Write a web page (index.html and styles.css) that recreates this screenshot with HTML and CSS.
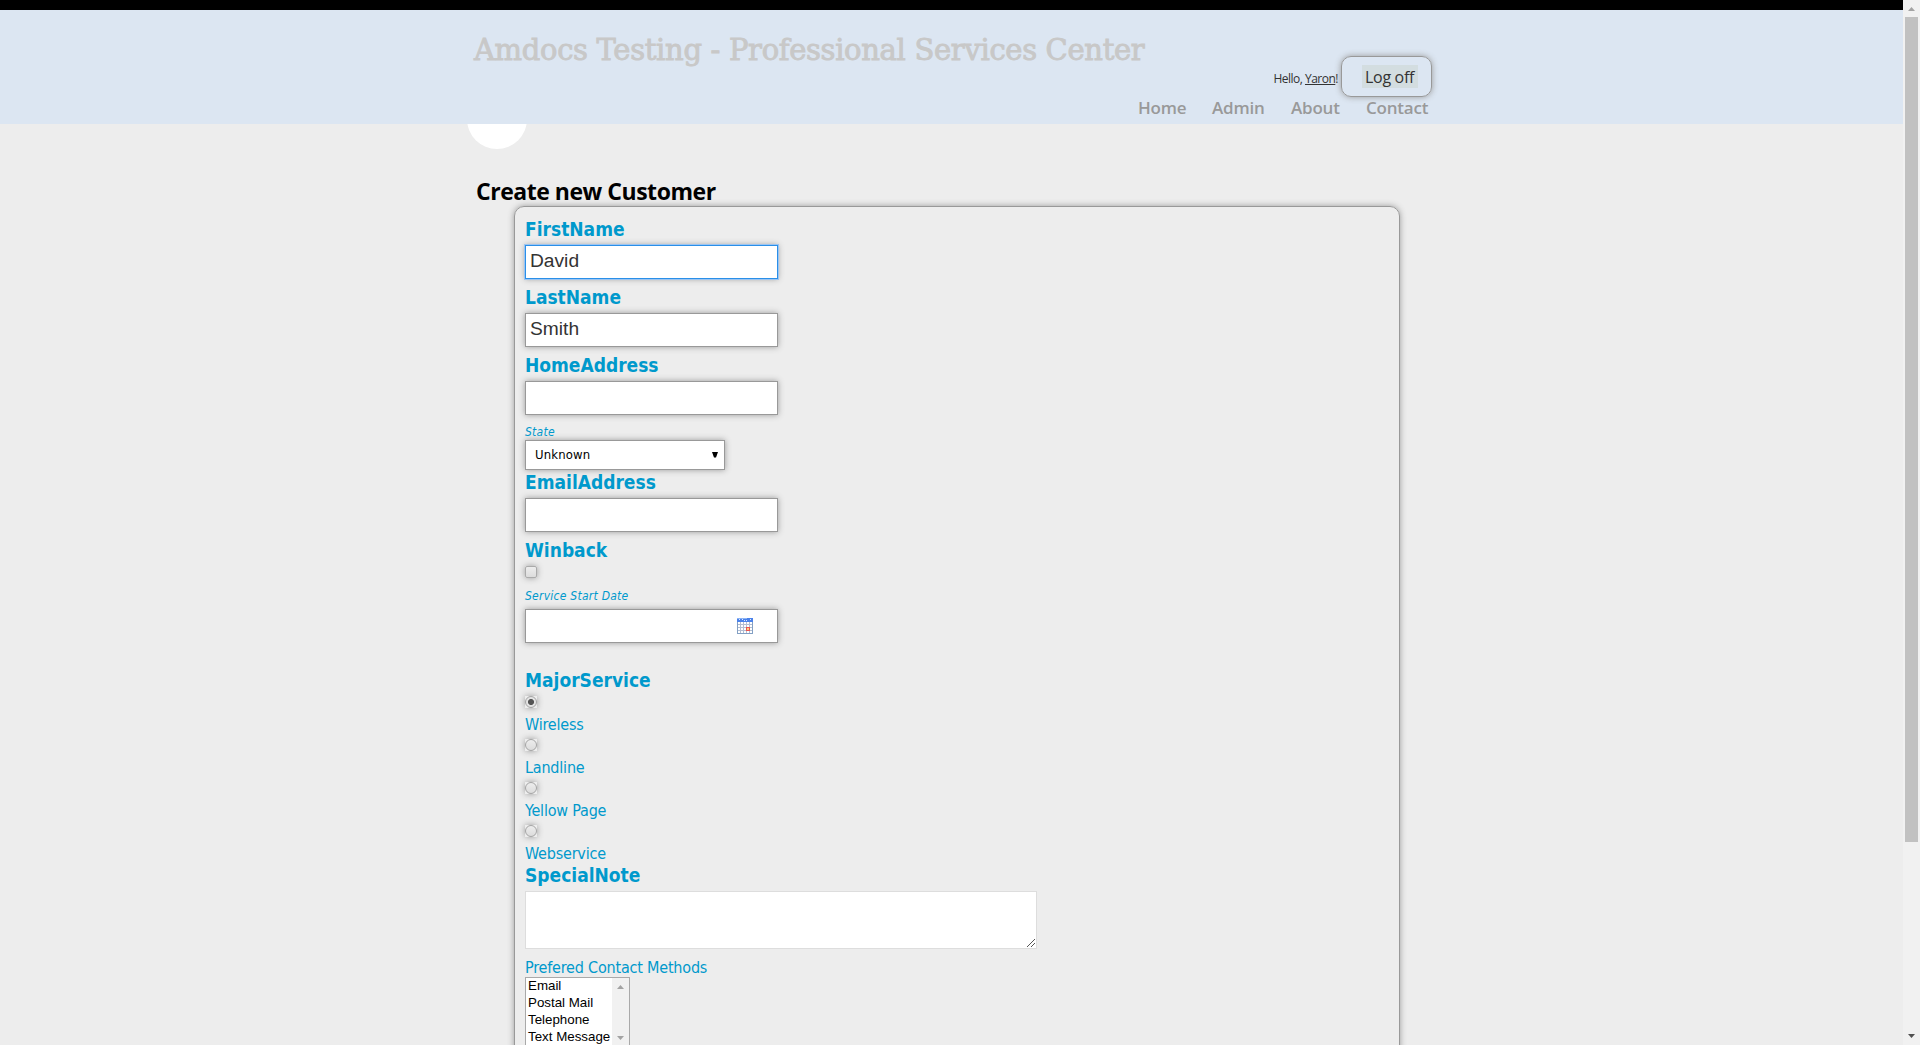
FILE: index.html
```
<!DOCTYPE html>
<html lang="en">
<head>
<meta charset="utf-8">
<title>Create new Customer</title>
<link rel="stylesheet" href="styles.css">
</head>
<body>
<div class="page">
  <header class="header">
    <div class="header-inner">
      <div class="site-title"><span>Amdocs Testing - Professional Services Center</span></div>
      <div class="header-side">
        <div class="login"><span class="hello">Hello, <a class="user">Yaron</a>!</span><div class="logoff-box"><a class="logoff">Log off</a></div></div>
        <nav class="nav"><a class="n1">Home</a><a class="n2">Admin</a><a class="n3">About</a><a class="n4">Contact</a></nav>
      </div>
    </div>
  </header>
  <main class="main">
    <div class="circle-clip"><div class="circle"></div></div>
    <h2 class="heading"><span>Create new Customer</span></h2>
    <form class="panel">
      <div class="label"><span>FirstName</span></div>
      <div class="input focused">David</div>
      <div class="label"><span>LastName</span></div>
      <div class="input">Smith</div>
      <div class="label"><span>HomeAddress</span></div>
      <div class="input"></div>
      <div class="hint state">State</div>
      <div class="select"><span>Unknown</span><svg width="6" height="6" viewBox="0 0 6 6"><path d="M0 0h6L4 5.500H2z"/></svg></div>
      <div class="label tight"><span>EmailAddress</span></div>
      <div class="input"></div>
      <div class="label"><span>Winback</span></div>
      <div class="check"></div>
      <div class="hint date">Service Start Date</div>
      <div class="input with-icon"><svg width="16" height="16" viewBox="0 0 16 16" shape-rendering="crispEdges"><rect width="16" height="16" fill="#83a0c4"/><rect width="16" height="4" fill="#4b82ea"/><path d="M0 0h10v1H0z" fill="#8db4f5"/><path d="M2 1h1v1H2zM5 1h1v1H5zM7 2h1v1H7zM9 2h1v1H9zM13 1h1v1h-1z" fill="#dce8ff"/><path d="M1 4h14v11H1z" fill="#fff"/><path d="M3 4h1v11H3zM6 4h1v11H6zM9 4h1v11H9zM12 4h1v11h-1zM1 6h14v1H1zM1 9h14v1H1zM1 12h14v1H1z" fill="#b4bed2"/><path d="M9 9h4v4H9z" fill="#ed5650"/><path d="M10 10h2v2h-2z" fill="#ffd077"/></svg></div>
      <div class="label major"><span>MajorService</span></div>
      <div class="radio on"></div><div class="option">Wireless</div>
      <div class="radio"></div><div class="option">Landline</div>
      <div class="radio"></div><div class="option">Yellow Page</div>
      <div class="radio"></div><div class="option">Webservice</div>
      <div class="label note"><span>SpecialNote</span></div>
      <div class="textarea"><svg width="8" height="8" viewBox="0 0 8 8" shape-rendering="crispEdges"><path d="M0 7h1v1H0zM1 6h1v1H1zM2 5h1v1H2zM3 4h1v1H3zM4 3h1v1H4zM5 2h1v1H5zM6 1h1v1H6zM7 0h1v1H7zM4 7h1v1H4zM5 6h1v1H5zM6 5h1v1H6zM7 4h1v1H7z" fill="#555"/></svg></div>
      <div class="option methods">Prefered Contact Methods</div>
      <div class="listbox">
        <div class="items"><div>Email</div><div>Postal Mail</div><div>Telephone</div><div>Text Message</div></div>
        <div class="list-scroll">
          <svg width="7" height="4" viewBox="0 0 7 4"><path d="M3.500 0L7 4H0z"/></svg>
          <svg width="7" height="4" viewBox="0 0 7 4"><path d="M3.500 4L7 0H0z"/></svg>
        </div>
      </div>
    </form>
  </main>
</div>
<div class="scrollbar">
  <svg width="7" height="4" viewBox="0 0 7 4"><path d="M3.500 0L7 4H0z" fill="#a3a3a3"/></svg>
  <div class="thumb"></div>
  <svg class="down" width="7" height="4" viewBox="0 0 7 4"><path d="M3.500 4L7 0H0z" fill="#505050"/></svg>
</div>
</body>
</html>
```
FILE: styles.css
```
* { box-sizing: border-box; }
html { height: 1045px; overflow: hidden; }
body { margin: 0; height: 1045px; overflow: hidden; display: flex; background: #ededed; }
.page { width: 1903px; height: 1045px; overflow: hidden; border-top: 10px solid #000; }
svg { display: block; }

.header { height: 114px; background: #dce6f2; }
.header-inner { width: 958px; margin-left: 474px; display: flex; justify-content: space-between; }
.site-title { width: 664px; padding-top: 21px; white-space: nowrap; font: 29px/38px "DejaVu Serif", serif; letter-spacing: -0.320px; color: #c8c8c8; -webkit-text-stroke: 0.900px #c8c8c8; }
.header-side { width: 294px; flex: none; padding-top: 46px; font-family: "Open Sans", sans-serif; }
.login { display: flex; justify-content: flex-end; color: #333; }
.hello { font-size: 12px; line-height: 16px; letter-spacing: -0.500px; margin: 15px 3px 0 0; white-space: nowrap; }
.user { text-decoration: underline; }
.logoff-box { width: 91px; height: 41px; border: 1px solid #999; border-radius: 10px; padding: 8px 0 0 20px; box-shadow: 0 0 6px #999; }
.logoff { display: block; width: 56px; height: 23px; padding-left: 3px; background: #d3dde0; font-size: 16px; line-height: 24px; letter-spacing: -0.300px; white-space: nowrap; }
.nav { display: flex; font-size: 17px; font-weight: 600; line-height: 22px; color: #999; }
.nav a { width: 78px; letter-spacing: -0.200px; }
.nav .n1 { width: 74px; }
.nav .n2 { width: 79px; }
.nav .n3 { width: 75px; }
.nav .n4 { width: 66px; }

.main { height: 921px; }
.circle-clip { height: 26px; overflow: hidden; margin-left: 467px; }
.circle { width: 60px; height: 60px; border-radius: 50%; background: #fff; margin-top: -35px; }
.heading { margin: 24px 0 0 476px; height: 32px; font: bold 23px/34px "Open Sans", sans-serif; letter-spacing: -0.470px; color: #000; }
.panel { width: 886px; height: 900px; margin-left: 514px; padding: 10px; border: 1px solid #999; border-radius: 10px; box-shadow: 0 0 6px #999; color: #0099cc; font-family: "DejaVu Sans Condensed", "DejaVu Sans", sans-serif; font-stretch: condensed; }
.label { height: 24px; line-height: 24px; margin-bottom: 4px; font-size: 19px; font-weight: bold; }
.input { width: 253px; height: 34px; margin-bottom: 6px; border: 1px solid #999; background: #fff; box-shadow: 0 0 6px #999; padding-left: 4px; font: 19.200px/30px "Liberation Sans", sans-serif; color: #333; }
.focused { border-color: #2a8fe8; outline: 1px solid #9cc5f2; }
.hint { height: 15px; font-size: 12px; line-height: 15px; font-style: italic; letter-spacing: 0.250px; }
.state { margin-top: 10px; }
.date { margin: 11px 0 5px; }
.select { width: 200px; height: 30px; display: flex; align-items: center; justify-content: space-between; padding: 0 6px 0 9px; border: 1px solid #999; background: #fff; box-shadow: 0 0 6px #999; color: #000; font-size: 13px; letter-spacing: 0.150px; }
.select span { line-height: 28px; padding-bottom: 1px; }
.with-icon { display: flex; align-items: center; justify-content: flex-end; padding-right: 24px; margin-bottom: 25px; }
.check { width: 12px; height: 12px; border: 1px solid #aaa; border-radius: 2px; background: linear-gradient(#ededed, #dcdcdc); box-shadow: 0 0 6px #999; }
.radio { width: 12px; height: 12px; background: #ededed; box-shadow: 0 0 6px #999; }
.radio::before { content: ""; display: block; box-sizing: border-box; width: 12px; height: 12px; border: 1px solid #a4a4a4; border-radius: 50%; background: linear-gradient(#ededed, #dcdcdc); }
.on::before { background: radial-gradient(circle, #555 2.700px, #e4e4e4 3.300px); }
.option { height: 20px; margin: 7px 0 4px; font-size: 16px; line-height: 20px; letter-spacing: -0.200px; }
.label.note { margin: -5px 0 4px; }
.textarea { width: 512px; height: 58px; display: flex; align-items: flex-end; justify-content: flex-end; padding: 1px; border: 1px solid #ddd; background: #fff; }
.methods { height: 19px; margin: 9px 0 0; }
.listbox { width: 105px; height: 70px; display: flex; justify-content: space-between; border: 1px solid #a9a9a9; background: #fff; color: #000; font: 13.333px/17px "Liberation Sans", sans-serif; }
.items { padding-left: 2px; margin-top: -1px; white-space: nowrap; }
.list-scroll { width: 17px; height: 68px; background: #f1f1f1; fill: #a3a3a3; display: flex; flex-direction: column; justify-content: space-between; align-items: center; padding: 7px 0 6px; }

.scrollbar { width: 17px; height: 1045px; background: #f1f1f1; display: flex; flex-direction: column; align-items: center; padding-top: 7px; }
.thumb { width: 13px; height: 825px; margin-top: 6px; background: #c1c1c1; }
.down { margin-top: 192px; }
```
